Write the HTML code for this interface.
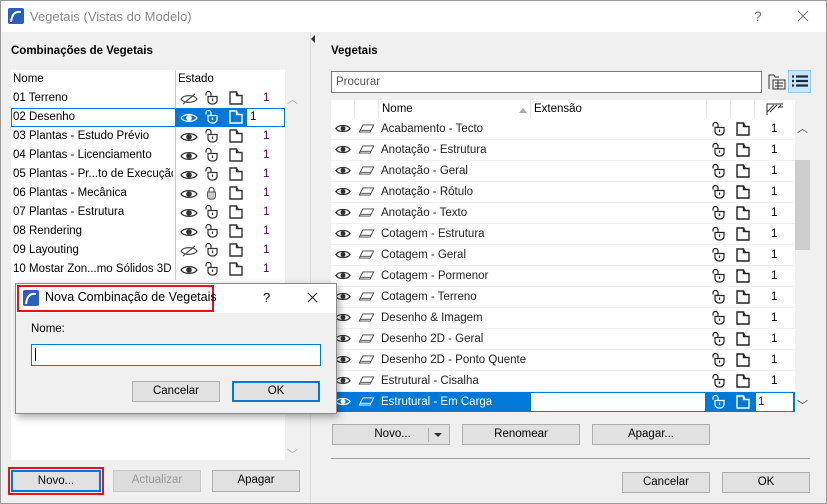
<!DOCTYPE html>
<html><head><meta charset="utf-8"><style>
*{box-sizing:border-box;margin:0;padding:0}
body{width:827px;height:504px;overflow:hidden;background:#f0f0f0;font-family:"Liberation Sans",sans-serif;font-size:11.5px;color:#000;position:relative}
.a{position:absolute}
.win{left:0;top:0;width:827px;height:504px;border:1px solid #9a9a9a}
.btn{position:absolute;background:#e1e1e1;border:1px solid #adadad;text-align:center;line-height:19px;font-size:11.5px}
.row{position:absolute;height:19px;line-height:19px;white-space:nowrap}
.n{color:#5a0057}
svg{position:absolute;overflow:visible}
</style></head><body>
<svg width="0" height="0" style="position:absolute">
<defs>
<symbol id="eye" viewBox="0 0 18 12"><path d="M1 6C4 1.5 14 1.5 17 6C14 10.5 4 10.5 1 6Z" fill="none" stroke="currentColor" stroke-width="1.3"/><circle cx="9" cy="6" r="2.8" fill="currentColor"/></symbol>
<symbol id="eyeoff" viewBox="0 0 18 12"><path d="M1 6C4 1.5 14 1.5 17 6C14 10.5 4 10.5 1 6Z" fill="none" stroke="currentColor" stroke-width="1.2"/><path d="M3 11L15 1" stroke="currentColor" stroke-width="1.2"/></symbol>
<symbol id="lock" viewBox="0 0 14 14"><path d="M2 4.5V3A2.5 2.5 0 0 1 7 3V5.5" fill="none" stroke="currentColor" stroke-width="1.2"/><path d="M4 5.5H13V9.5A4 3.5 0 0 1 8.5 13A4 3.5 0 0 1 4 9.5Z" fill="none" stroke="currentColor" stroke-width="1.2"/><path d="M8.5 7.5V10" stroke="currentColor" stroke-width="1.3"/></symbol>
<symbol id="lockc" viewBox="0 0 14 14"><path d="M5 6V4A2.5 2.5 0 0 1 10 4V6" fill="none" stroke="#555" stroke-width="1.2"/><path d="M3.5 6H11.5V10A3 3 0 0 1 7.5 13A3 3 0 0 1 3.5 10Z" fill="#c8c8c8" stroke="#555" stroke-width="1"/></symbol>
<symbol id="fold" viewBox="0 0 14 14"><path d="M1 13V1H7.5V4.5H13V13Z" fill="none" stroke="currentColor" stroke-width="1.4"/><path d="M7.5 1L9.5 4.5" stroke="currentColor" stroke-width="1.2" fill="none"/></symbol>
<symbol id="layer" viewBox="0 0 18 10"><path d="M5 1H17L13 9H1Z" fill="none" stroke="currentColor" stroke-width="1"/><path d="M2 7H14" stroke="currentColor" stroke-width="1"/></symbol>
<symbol id="x" viewBox="0 0 12 12"><path d="M1 1L11 11M11 1L1 11" stroke="currentColor" stroke-width="1.1"/></symbol>
</defs></svg>
<div class="a win"></div>
<div class="a" style="left:1px;top:1px;width:825px;height:31px;background:#fff"></div>
<svg style="left:8px;top:8px" width="16" height="16"><rect width="16" height="16" rx="2" fill="#2b5fbd"/><path d="M3 14C4 6 7 3 13 4" stroke="#fff" stroke-width="2" fill="none"/></svg>
<div class="a" style="left:30px;top:9px;color:#8a8a8a;font-size:13px">Vegetais (Vistas do Modelo)</div>
<div class="a" style="left:754px;top:8px;color:#777;font-size:14px">?</div>
<svg style="left:797px;top:10px;color:#777" width="12" height="12"><use href="#x"/></svg>
<div class="a" style="left:310px;top:32px;width:1px;height:471px;background:#dcdcdc"></div>
<div class="a" style="left:311px;top:35px;width:0;height:0;border-top:4px solid transparent;border-bottom:4px solid transparent;border-right:4px solid #333"></div>

<div class="a" style="left:11px;top:45px;font-weight:bold">Combinações de Vegetais</div>
<div class="a" style="left:11px;top:70px;width:290px;height:390px;background:#fff"></div>
<div class="a" style="left:285px;top:70px;width:16px;height:390px;background:#f0f0f0"></div>
<div class="a" style="left:287px;top:91px;color:#aaa;font-size:11px">︿</div>
<div class="a" style="left:287px;top:446px;color:#aaa;font-size:11px">﹀</div>
<div class="a" style="left:13px;top:73px">Nome</div>
<div class="a" style="left:178px;top:73px">Estado</div>
<div class="a" style="left:175px;top:70px;width:1px;height:210px;background:#ccc"></div>
<div id="L"></div>

<div class="btn" style="left:8px;top:467px;width:96px;height:28px;border:2px solid #e5131b;background:none"></div>
<div class="btn" style="left:11px;top:470px;width:90px;height:22px;border:2px solid #0078d7">Novo...</div>
<div class="btn" style="left:113px;top:470px;width:88px;height:22px;color:#999;background:#dcdcdc;border-color:#c8c8c8">Actualizar</div>
<div class="btn" style="left:212px;top:470px;width:88px;height:22px">Apagar</div>

<div class="a" style="left:331px;top:45px;font-weight:bold">Vegetais</div>
<div class="a" style="left:331px;top:71px;width:431px;height:22px;background:#fff;border:1px solid #7a7a7a;padding-left:4px;line-height:20px;color:#555">Procurar</div>
<svg style="left:768px;top:73px" width="18" height="17" viewBox="0 0 18 17"><path d="M1 16V2H6L7 4H11" fill="none" stroke="#333"/><rect x="5" y="7" width="12" height="9" fill="none" stroke="#333"/><path d="M7 10H15M7 13H15M10 7V16" stroke="#333"/></svg>
<div class="a" style="left:788px;top:70px;width:23px;height:23px;background:#cce4f7;border:1px solid #99c9ef"></div>
<svg style="left:792px;top:75px" width="16" height="13"><path d="M0 1.5H2M4 1.5H16M0 6H2M4 6H16M0 10.5H2M4 10.5H16" stroke="#1a2a3a" stroke-width="2.2"/></svg>
<div class="a" style="left:331px;top:100px;width:464px;height:19px;background:#fff"></div>
<div class="a" style="left:354px;top:100px;width:1px;height:19px;background:#e6e6e6"></div>
<div class="a" style="left:378px;top:100px;width:1px;height:19px;background:#e6e6e6"></div>
<div class="a" style="left:530px;top:100px;width:1px;height:19px;background:#e6e6e6"></div>
<div class="a" style="left:706px;top:100px;width:1px;height:19px;background:#e6e6e6"></div>
<div class="a" style="left:730px;top:100px;width:1px;height:19px;background:#e6e6e6"></div>
<div class="a" style="left:754px;top:100px;width:1px;height:19px;background:#e6e6e6"></div>
<div class="a" style="left:382px;top:103px">Nome</div>
<div class="a" style="left:519px;top:108px;width:0;height:0;border-left:4px solid transparent;border-right:4px solid transparent;border-bottom:5px solid #aaa"></div>
<div class="a" style="left:534px;top:103px">Extensão</div>
<svg style="left:766px;top:103px" width="18" height="13"><path d="M1 12V1H17" fill="none" stroke="#333"/><path d="M1 9L8 2M4 9L11 2M8 5L11 2M12 5L15 2M13 4H17" stroke="#333"/></svg>
<div class="a" style="left:795px;top:119px;width:15px;height:294px;background:#f0f0f0"></div>
<div class="a" style="left:795px;top:160px;width:15px;height:90px;background:#cdcdcd"></div>
<div class="a" style="left:797px;top:120px;font-size:11px;color:#444">︿</div>
<div class="a" style="left:797px;top:397px;font-size:11px;color:#444">﹀</div>
<div id="R"></div>

<div class="btn" style="left:332px;top:424px;width:118px;height:21px">&nbsp;Novo...<span style="position:absolute;left:95px;top:3px;height:14px;border-left:1px solid #adadad"></span><span style="position:absolute;left:101px;top:8px;border-left:4px solid transparent;border-right:4px solid transparent;border-top:4px solid #333"></span></div>
<div class="btn" style="left:462px;top:424px;width:118px;height:21px">Renomear</div>
<div class="btn" style="left:592px;top:424px;width:118px;height:21px">Apagar...</div>
<div class="a" style="left:331px;top:458px;width:479px;height:1px;background:#a0a0a0"></div>
<div class="btn" style="left:622px;top:472px;width:88px;height:21px">Cancelar</div>
<div class="btn" style="left:722px;top:472px;width:88px;height:21px">OK</div>

<div class="a" style="left:15px;top:283px;width:322px;height:131px;background:#f0f0f0;border:1px solid #888;box-shadow:2px 3px 8px rgba(0,0,0,.35)"></div>
<div class="a" style="left:16px;top:284px;width:320px;height:29px;background:#fff"></div>
<div class="a" style="left:17px;top:285px;width:197px;height:27px;border:2px solid #e5131b"></div>
<svg style="left:23px;top:290px" width="16" height="16"><rect width="16" height="16" rx="2" fill="#2b5fbd"/><path d="M3 14C4 6 7 3 13 4" stroke="#fff" stroke-width="2" fill="none"/></svg>
<div class="a" style="left:45px;top:290px;font-size:12.5px">Nova Combinação de Vegetais</div>
<div class="a" style="left:263px;top:290px;font-size:13px">?</div>
<svg style="left:307px;top:292px;color:#222" width="11" height="11"><use href="#x"/></svg>
<div class="a" style="left:31px;top:323px">Nome:</div>
<div class="a" style="left:31px;top:344px;width:290px;height:22px;background:#fff;border:1px solid #0078d7"></div>
<div class="a" style="left:35px;top:348px;width:1px;height:13px;background:#000"></div>
<div class="btn" style="left:132px;top:381px;width:88px;height:21px">Cancelar</div>
<div class="btn" style="left:232px;top:381px;width:88px;height:21px;border:2px solid #0078d7;line-height:17px">OK</div>

<script>
var L=["01 Terreno","02 Desenho","03 Plantas - Estudo Prévio","04 Plantas - Licenciamento","05 Plantas - Pr...to de Execução","06 Plantas - Mecânica","07 Plantas - Estrutura","08 Rendering","09 Layouting","10 Mostar Zon...mo Sólidos 3D"];
var h="";
L.forEach(function(t,i){var y=89+i*19;
 if(i==1){h+='<div class="a" style="left:11px;top:'+y+'px;width:165px;height:19px;border:1px solid #0078d7;background:#fff"></div><div class="a" style="left:176px;top:'+y+'px;width:109px;height:19px;background:#0078d7"></div><div class="a" style="left:247px;top:'+(y+1)+'px;width:37px;height:17px;background:#fff"></div><div class="row" style="left:250px;top:'+y+'px">1</div>';}
 else h+='<div class="row n" style="left:263px;top:'+y+'px">1</div>';
 h+='<div class="row" style="left:13px;top:'+y+'px;width:160px;overflow:hidden">'+t+'</div>';
 var c=i==1?'#fff':'#333';
 h+='<svg style="left:180px;top:'+(y+4)+'px;color:'+(i==0||i==8?'#555':c)+'" width="18" height="12"><use href="#'+(i==0||i==8?'eyeoff':'eye')+'"/></svg>';
 h+='<svg style="left:204px;top:'+(y+2)+'px;color:'+c+'" width="14" height="14"><use href="#'+(i==5?'lockc':'lock')+'"/></svg>';
 h+='<svg style="left:229px;top:'+(y+2)+'px;color:'+c+'" width="14" height="14"><use href="#fold"/></svg>';
});
document.getElementById("L").innerHTML=h;
var R=["Acabamento - Tecto","Anotação - Estrutura","Anotação - Geral","Anotação - Rótulo","Anotação - Texto","Cotagem - Estrutura","Cotagem - Geral","Cotagem - Pormenor","Cotagem - Terreno","Desenho &amp; Imagem","Desenho 2D - Geral","Desenho 2D - Ponto Quente","Estrutural - Cisalha","Estrutural - Em Carga"];
h="";
R.forEach(function(t,i){var y=119+i*21;var s=i==13;
 h+='<div class="a" style="left:331px;top:'+y+'px;width:464px;height:20px;background:'+(s?'#0078d7':'#fff')+'"></div>';
 if(s)h+='<div class="a" style="left:531px;top:'+(y+1)+'px;width:174px;height:18px;background:#fff"></div><div class="a" style="left:756px;top:'+(y+1)+'px;width:37px;height:18px;background:#fff"></div><div class="row n" style="left:758px;top:'+(y+1)+'px">1</div>';
 else h+='<div class="row" style="left:771px;top:'+(y+1)+'px">1</div>';
 var c=s?'#fff':'#222';
 h+='<div class="row" style="left:381px;top:'+(y+1)+'px;color:'+c+'">'+t+'</div>';
 h+='<svg style="left:335px;top:'+(y+4)+'px;color:'+(s?'#fff':'#333')+'" width="16" height="11"><use href="#eye"/></svg>';
 h+='<svg style="left:358px;top:'+(y+5)+'px;color:'+(s?'#fff':'#444')+'" width="17" height="9"><use href="#layer"/></svg>';
 h+='<svg style="left:711px;top:'+(y+3)+'px;color:'+c+'" width="14" height="14"><use href="#lock"/></svg>';
 h+='<svg style="left:736px;top:'+(y+3)+'px;color:'+c+'" width="14" height="14"><use href="#fold"/></svg>';
});
document.getElementById("R").innerHTML=h;
</script>
</body></html>
